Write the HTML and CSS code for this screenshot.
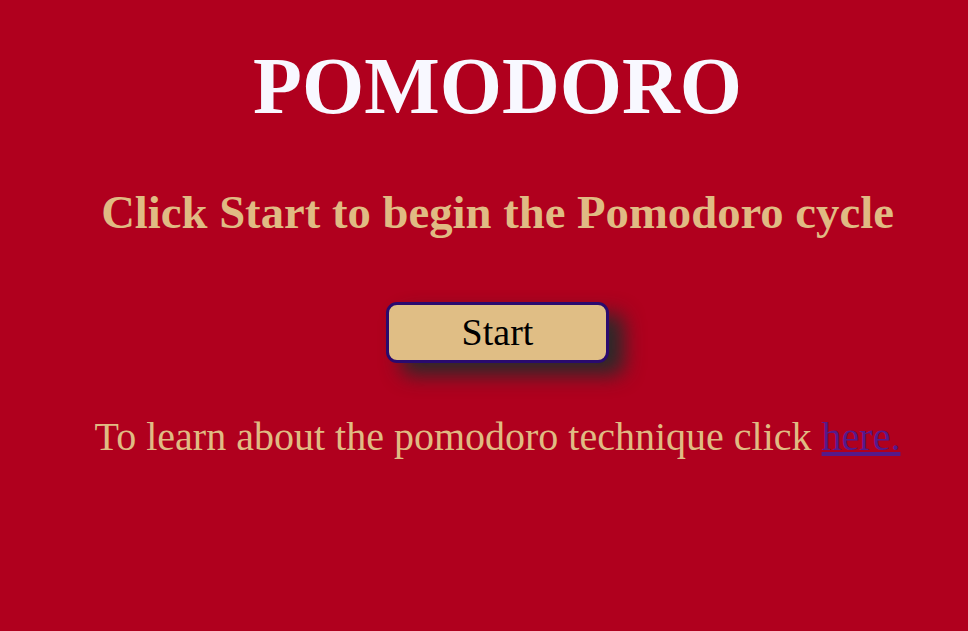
FILE: index.html
```html
<!DOCTYPE html>
<html>
<head>
<meta charset="utf-8">
<link rel="stylesheet" href="styles.css">
</head>
<body>
<main class="page">
  <h1 class="title">POMODORO</h1>
  <h2 class="subtitle">Click Start to begin the Pomodoro cycle</h2>
  <button class="start">Start</button>
  <p class="learn">To learn about the pomodoro technique click <a class="link" href="#">here.</a></p>
</main>
</body>
</html>
```
FILE: styles.css
```css
html, body {
  margin: 0;
  padding: 0;
  background: #b0001e;
  height: 100%;
}
body {
  font-family: "Liberation Serif", "Times New Roman", serif;
}
.page {
  display: flex;
  flex-direction: column;
  align-items: center;
  text-align: center;
  padding: 40px 0 0 27px;
}
.title {
  margin: 0;
  font-size: 80px;
  font-weight: bold;
  color: #f8f8ff;
  line-height: 1.15;
}
.subtitle {
  margin: 54px 0 0;
  font-size: 46.7px;
  font-weight: bold;
  color: #e0bb83;
  line-height: 1.15;
}
.start {
  margin-top: 62px;
  width: 223px;
  height: 61px;
  background: #e0be85;
  border: 3px solid #2a0a6e;
  border-radius: 11px;
  font-family: "Liberation Serif", "Times New Roman", serif;
  font-size: 38px;
  color: #000;
  box-shadow: 15px 12px 20px #2a2a2a;
  padding: 0;
}
.learn {
  margin: 51px 0 0;
  font-size: 40px;
  color: #e0bb83;
  line-height: 1.15;
}
.link {
  color: #551a8b;
}
```
